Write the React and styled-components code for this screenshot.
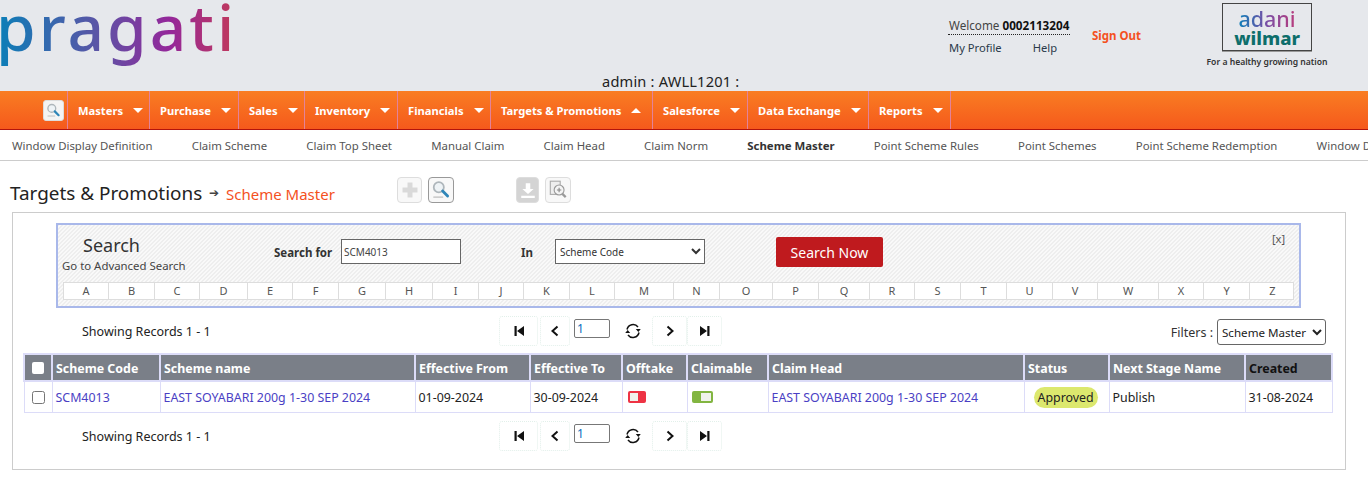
import React from 'react';
import styled, { createGlobalStyle } from 'styled-components';

const GlobalStyle = createGlobalStyle`
    html, body {
        margin: 0;
        padding: 0;
        background: #fff;
        overflow: hidden;
    }
    body {
        font-family: 'Noto Sans', 'Open Sans', sans-serif;
        color: #222;
    }
`
const Page = styled.div`
    width: 1368px;
    height: 481px;
    overflow: hidden;
`
const Header = styled.header`
    height: 91px;
    background: #e6e8ec;
    display: flex;
    position: relative;
`
const LogoWord = styled.div`
    width: 944px;
    height: 46px;
    font-size: 64px;
    font-weight: 500;
    line-height: 46px;
    letter-spacing: 3px;
    margin: 4px 4px 0 0;
    span {
        margin-left: -4px;
        background: linear-gradient(90deg, #0a7fb8 0%, #5b55a6 42%, #94279a 72%, #c23a5a 100%);
        -webkit-background-clip: text;
        background-clip: text;
        color: transparent;
    }
`
const UserBlock = styled.div`
    width: 122px;
    padding-top: 17px;
    font-size: 11.7px;
`
const Welcome = styled.div`
    height: 17px;
    line-height: 17px;
    border-bottom: 1px dotted #222;
    color: #444;
    white-space: nowrap;
    padding-left: 1px;
    b {
        color: #111;
    }
`
const UserLinks = styled.div`
    display: flex;
    gap: 31px;
    padding: 4px 0 0 1px;
    line-height: 17px;
    font-size: 11.2px;
    color: #2a3a4a;
`
const SignOut = styled.a`
    margin: 27px 0 0 22px;
    width: 118px;
    font-size: 11.5px;
    font-weight: 700;
    color: #f4511e;
    line-height: 17px;
`
const BrandBlock = styled.div`
    width: 122px;
    padding-top: 3px;
    display: flex;
    flex-direction: column;
    align-items: center;
    margin-left: -4px;
`
const BrandBox = styled.div`
    width: 90px;
    height: 48px;
    border: 1px solid #444;
    box-sizing: border-box;
    box-shadow: 0 1px 0 #999;
    text-align: center;
    display: flex;
    flex-direction: column;
    align-items: center;
    padding-top: 3px;
`
const BrandTop = styled.div`
    font-size: 21.5px;
    font-weight: 500;
    line-height: 23px;
    background: linear-gradient(90deg, #0a7fb8, #7a4ea5, #b93c7c);
    -webkit-background-clip: text;
    background-clip: text;
    color: transparent;
`
const BrandBottom = styled.div`
    font-size: 18.5px;
    font-weight: 800;
    line-height: 17px;
    margin-top: -1px;
    color: #0d6e6b;
`
const Tagline = styled.div`
    font-size: 8.6px;
    font-weight: 600;
    color: #333;
    margin-top: 5px;
    white-space: nowrap;
`
const AdminLine = styled.div`
    position: absolute;
    left: 602px;
    top: 72px;
    font-size: 14.6px;
    letter-spacing: 0.2px;
    line-height: 19px;
    color: #222;
`
const Nav = styled.nav`
    height: 38px;
    background: linear-gradient(#f97d22, #f5591c);
    border-bottom: 1px solid #b3130c;
    display: flex;
    padding-left: 43px;
`
const NavSearch = styled.div`
    width: 24px;
    display: flex;
    align-items: center;
`
const NavIconBox = styled.div`
    width: 21px;
    height: 21px;
    box-sizing: border-box;
    border: 1px solid #ddd;
    border-radius: 3px;
    background: #f4f4f4;
    display: flex;
    align-items: center;
    justify-content: center;
`
const NavItem = styled.div`
    width: ${p => p.$w}px;
    box-sizing: border-box;
    border-left: 1px solid #e3829a;
    color: #fff;
    font-size: 11.2px;
    font-weight: 700;
    display: flex;
    align-items: center;
    padding-left: 10px;
    gap: 10px;
    white-space: nowrap;
    &:last-child {
        border-right: 1px solid #e3829a;
    }
`
const Caret = styled.span`
    width: 0;
    height: 0;
    border-left: 5px solid transparent;
    border-right: 5px solid transparent;
    border-top: ${p => p.$up ? '0' : '5px solid #fff'};
    border-bottom: ${p => p.$up ? '5px solid #fff' : '0'};
`
const SubNav = styled.div`
    height: 30px;
    border-bottom: 1px solid #ccc;
    display: flex;
    align-items: center;
    gap: 39.2px;
    padding-left: 12px;
    font-size: 11.4px;
    color: #555;
    white-space: nowrap;
    overflow: hidden;
`
const SubItem = styled.span`
    font-weight: ${p => p.$active ? 700 : 400};
    color: ${p => p.$active ? '#333' : '#555'};
`
const TitleRow = styled.div`
    height: 51px;
    display: flex;
    align-items: center;
    padding: 9px 0 0 10px;
    box-sizing: border-box;
`
const Crumb = styled.div`
    font-size: 18.9px;
    color: #222;
    width: 199px;
    white-space: nowrap;
    margin-top: 3px;
`
const CrumbArrow = styled.span`
    color: #444;
    font-size: 12px;
    width: 17px;
    margin-top: 2px;
`
const CrumbCurrent = styled.div`
    color: #f4511e;
    font-size: 15px;
    width: 171px;
    white-space: nowrap;
    margin-top: 6px;
`
const ToolGroup = styled.div`
    display: flex;
    gap: 6px;
    margin-right: ${p => p.$mr || 0}px;
    margin-top: -2px;
`
const ToolButton = styled.div`
    width: ${p => p.$w || 26}px;
    height: 26px;
    border: 1px solid ${p => p.$on ? '#999' : '#ddd'};
    border-radius: 4px;
    background: ${p => p.$fill || '#f8f8f8'};
    box-sizing: border-box;
    display: flex;
    align-items: center;
    justify-content: center;
`
const Panel = styled.section`
    margin-left: 12px;
    width: 1334px;
    height: 258px;
    box-sizing: border-box;
    border: 1px solid #ccc;
    padding: 10px 11px 0;
`
const SearchBox = styled.div`
    width: 1245px;
    height: 85px;
    margin-left: 32px;
    box-sizing: border-box;
    border: 2px solid #a9b8ea;
    background: repeating-linear-gradient(135deg, #eeeeee 0 1.414px, #f9f9f9 1.414px 2.828px);
    position: relative;
    padding: 0 5px;
`
const SearchTop = styled.div`
    height: 57px;
    display: flex;
    align-items: flex-start;
`
const SearchTitle = styled.div`
    width: 211px;
    padding-top: 8px;
`
const SearchHeading = styled.div`
    font-size: 18px;
    line-height: 25px;
    padding-left: 20px;
    color: #333;
`
const AdvLink = styled.div`
    font-size: 11.4px;
    line-height: 15px;
    color: #444;
    white-space: nowrap;
    margin-left: -1px;
`
const FieldLabel = styled.label`
    font-size: 11.5px;
    font-weight: 700;
    color: #333;
    line-height: 17px;
    margin-top: 19px;
    width: ${p => p.$w}px;
`
const SearchInput = styled.input`
    width: 120px;
    height: 25px;
    margin-top: 14px;
    box-sizing: border-box;
    border: 1px solid #666;
    background: #fff;
    font: 10px 'Noto Sans', sans-serif;
    color: #444;
    padding: 0 2px;
    margin-right: 60px;
`
const SearchSelect = styled.select`
    width: 150px;
    height: 25px;
    margin-top: 14px;
    box-sizing: border-box;
    border: 1px solid #666;
    background: #fff;
    font: 10px 'Noto Sans', sans-serif;
    color: #333;
    margin-right: 71px;
    padding: 0;
`
const SearchButton = styled.button`
    width: 107px;
    height: 30px;
    margin-top: 12px;
    border: 0;
    border-radius: 2px;
    background: #bf1a1e;
    color: #fff;
    font: 14px 'Noto Sans', sans-serif;
    padding: 0;
`
const CloseLink = styled.span`
    position: absolute;
    top: 6px;
    right: 14px;
    font-size: 11px;
    color: #555;
`
const Alphabet = styled.div`
    display: grid;
    grid-template-columns: 45px 46px 45px 48px 45px 46px 47px 47px 46px 45px 46px 45px 59px 46px 53px 46px 51px 45px 46px 46px 46px 45px 61px 45px 46px 45px;
    width: 1231px;
    height: 18px;
    box-sizing: border-box;
    background: #fff;
    border: 1px solid #ddd;
`
const Letter = styled.span`
    font-size: 11px;
    line-height: 16px;
    color: #555;
    text-align: center;
    border-right: 1px solid #ddd;
    &:last-child {
        border-right: 0;
    }
`
const Pager = styled.div`
    height: ${p => p.$h}px;
    display: flex;
    align-items: center;
    position: relative;
    padding-top: ${p => p.$pt || 0}px;
    box-sizing: border-box;
`
const Records = styled.div`
    width: 475px;
    padding: 1px 0 0 58px;
    box-sizing: border-box;
    font-size: 12.5px;
    color: #222;
`
const PageButton = styled.div`
    width: ${p => p.$w}px;
    height: 30px;
    box-sizing: border-box;
    border: 1px dotted #e2f0ea;
    border-radius: 3px;
    display: flex;
    align-items: center;
    justify-content: center;
    margin-right: ${p => p.$mr || 0}px;
`
const PageInput = styled.input`
    width: 36px;
    height: 19px;
    box-sizing: border-box;
    border: 1px solid #777;
    border-radius: 2px;
    font: 12px 'Noto Sans', sans-serif;
    color: #0a6ebd;
    padding: 0 2px;
    margin: -5px 14px 0 0;
`
const RefreshWrap = styled.div`
    width: 28px;
    display: flex;
    justify-content: flex-start;
`
const FilterBlock = styled.div`
    position: absolute;
    right: 8px;
    top: 11px;
    display: flex;
    align-items: center;
    gap: 4px;
    font-size: 12.5px;
    color: #333;
`
const FilterSelect = styled.select`
    width: 109px;
    height: 26px;
    box-sizing: border-box;
    border: 1px solid #666;
    border-radius: 3px;
    background: #fff;
    font: 11.6px 'Noto Sans', sans-serif;
    color: #222;
    padding: 0;
`
const Table = styled.table`
    width: 1309px;
    margin-left: -1px;
    border-collapse: collapse;
    table-layout: fixed;
    font-size: 12.4px;
    border: 1px solid #dcdcf8;
`
const Th = styled.th`
    height: 24px;
    padding: 1px 3px 0;
    background: #7a7f88;
    border: 2px solid #dcdcf8;
    color: ${p => p.$dark ? '#111' : '#fff'};
    font-weight: 700;
    text-align: left;
    white-space: nowrap;
    overflow: hidden;
`
const Td = styled.td`
    height: 30px;
    padding: 0 3px;
    border: 1px solid #dcdcf8;
    color: #222;
    white-space: nowrap;
    overflow: hidden;
`
const RowLink = styled.a`
    color: #4a3fc4;
`
const Toggle = styled.span`
    display: block;
    width: ${p => p.$w}px;
    height: 12px;
    margin-left: ${p => p.$ml}px;
    border-radius: 2px;
    background: ${p => p.$color};
    position: relative;
    &::after {
        content: '';
        position: absolute;
        top: 2px;
        bottom: 2px;
        left: ${p => p.$knob}px;
        width: ${p => p.$kw}px;
        background: #f0f2ec;
    }
`
const StatusPill = styled.span`
    display: inline-block;
    margin-left: 6px;
    padding: 0 4px;
    line-height: 21px;
    border-radius: 11px;
    background: #dce86e;
    color: #222;
`
const CheckBox = styled.input`
    display: block;
    margin: 0 auto;
    width: 13px;
    height: 13px;
    accent-color: #fff;
`
const HeadCheck = styled.span`
    display: block;
    width: 12px;
    height: 12px;
    margin: 0 auto;
    border-radius: 2px;
    background: #fff;
`

const menus = [
    ['Masters', 82],
    ['Purchase', 89],
    ['Sales', 66],
    ['Inventory', 93],
    ['Financials', 93],
    ['Targets & Promotions', 162, true],
    ['Salesforce', 95],
    ['Data Exchange', 121],
    ['Reports', 83],
];
const subItems = ['Window Display Definition', 'Claim Scheme', 'Claim Top Sheet', 'Manual Claim', 'Claim Head', 'Claim Norm', 'Scheme Master', 'Point Scheme Rules', 'Point Schemes', 'Point Scheme Redemption', 'Window Display Definition'];
const letters = 'ABCDEFGHIJKLMNOPQRSTUVWXYZ'.split('');
const columns = [28, 108, 255, 115, 92, 65, 81, 256, 85, 136, 87];
const schemeName = 'EAST SOYABARI 200g 1-30 SEP 2024';

function Magnifier({ size }) {
    return (
        <svg width={size} height={size} viewBox="0 0 20 20">
            <circle cx="8" cy="7.5" r="4.6" fill="#eef3f6" stroke="#aeb6bb" strokeWidth="1.6" />
            <path d="M11.5 11l4.5 4.5" stroke="#2f86b8" strokeWidth="2.6" strokeLinecap="round" />
            <path d="M3 16.5h9" stroke="#c9c9c9" strokeWidth="1.4" />
        </svg>
    );
}

function FirstIcon() {
    return <svg width="12" height="12" viewBox="0 0 12 12"><path d="M1.5 1h2.2v10H1.5zM11 1v10L4 6z" fill="#111" /></svg>;
}
function LastIcon() {
    return <svg width="12" height="12" viewBox="0 0 12 12"><path d="M8.3 1h2.2v10H8.3zM1 1v10l7-5z" fill="#111" /></svg>;
}
function Chevron({ right }) {
    return (
        <svg width="10" height="12" viewBox="0 0 10 12">
            <path d={right ? 'M2.5 1.5L7.5 6l-5 4.5' : 'M7.5 1.5L2.5 6l5 4.5'} fill="none" stroke="#111" strokeWidth="2" />
        </svg>
    );
}
function RefreshIcon() {
    return (
        <svg width="18" height="18" viewBox="0 0 18 18">
            <path d="M3 7.5A6.2 6.2 0 0 1 14 5" fill="none" stroke="#111" strokeWidth="1.5" />
            <path d="M15 10.5A6.2 6.2 0 0 1 4 13" fill="none" stroke="#111" strokeWidth="1.5" />
            <path d="M11.8 7h5l-2.5 3zM1.2 11h5L3.7 8z" fill="#111" />
        </svg>
    );
}

function Pagination() {
    return (
        <>
            <PageButton $w={39} $mr={2}><FirstIcon /></PageButton>
            <PageButton $w={30} $mr={4}><Chevron /></PageButton>
            <PageInput defaultValue="1" />
            <RefreshWrap><RefreshIcon /></RefreshWrap>
            <PageButton $w={35}><Chevron right /></PageButton>
            <PageButton $w={35}><LastIcon /></PageButton>
        </>
    );
}

export default function App() {
    return (
        <Page>
            <GlobalStyle />
            <Header>
                <LogoWord><span>pragati</span></LogoWord>
                <UserBlock>
                    <Welcome>Welcome <b>0002113204</b></Welcome>
                    <UserLinks><span>My Profile</span><span>Help</span></UserLinks>
                </UserBlock>
                <SignOut>Sign Out</SignOut>
                <BrandBlock>
                    <BrandBox>
                        <BrandTop>adani</BrandTop>
                        <BrandBottom>wilmar</BrandBottom>
                    </BrandBox>
                    <Tagline>For a healthy growing nation</Tagline>
                </BrandBlock>
                <AdminLine>admin : AWLL1201 :</AdminLine>
            </Header>
            <Nav>
                <NavSearch>
                    <NavIconBox><Magnifier size={17} /></NavIconBox>
                </NavSearch>
                {menus.map(([label, width, up]) => (
                    <NavItem key={label} $w={width}>{label}<Caret $up={up} /></NavItem>
                ))}
            </Nav>
            <SubNav>
                {subItems.map((item, i) => (
                    <SubItem key={i} $active={item === 'Scheme Master'}>{item}</SubItem>
                ))}
            </SubNav>
            <TitleRow>
                <Crumb>Targets &amp; Promotions</Crumb>
                <CrumbArrow>➔</CrumbArrow>
                <CrumbCurrent>Scheme Master</CrumbCurrent>
                <ToolGroup $mr={62}>
                    <ToolButton $w={25}>
                        <svg width="18" height="18" viewBox="0 0 18 18"><path d="M6.5 1.5h5v5h5v5h-5v5h-5v-5h-5v-5h5z" fill="#d9d9d9" /></svg>
                    </ToolButton>
                    <ToolButton $on><Magnifier size={22} /></ToolButton>
                </ToolGroup>
                <ToolGroup>
                    <ToolButton $w={23} $fill="#d4d4d4">
                        <svg width="18" height="18" viewBox="0 0 16 16"><path d="M6 2h4v5h3l-5 4.5L3 7h3zM2 13h12v2H2z" fill="#fff" /></svg>
                    </ToolButton>
                    <ToolButton>
                        <svg width="22" height="22" viewBox="0 0 20 20">
                            <rect x="3" y="2" width="9" height="12" fill="#eee" stroke="#aaa" />
                            <circle cx="11" cy="10" r="4.5" fill="#f4f4f4" stroke="#999" />
                            <path d="M9 10h4M11 8v4" stroke="#888" />
                            <path d="M14 13.5l3 3" stroke="#999" strokeWidth="2" />
                        </svg>
                    </ToolButton>
                </ToolGroup>
            </TitleRow>
            <Panel>
                <SearchBox>
                    <SearchTop>
                        <SearchTitle>
                            <SearchHeading>Search</SearchHeading>
                            <AdvLink>Go to Advanced Search</AdvLink>
                        </SearchTitle>
                        <FieldLabel $w={67}>Search for</FieldLabel>
                        <SearchInput defaultValue="SCM4013" />
                        <FieldLabel $w={34}>In</FieldLabel>
                        <SearchSelect defaultValue="Scheme Code"><option>Scheme Code</option></SearchSelect>
                        <SearchButton>Search Now</SearchButton>
                    </SearchTop>
                    <CloseLink>[x]</CloseLink>
                    <Alphabet>
                        {letters.map(letter => <Letter key={letter}>{letter}</Letter>)}
                    </Alphabet>
                </SearchBox>
                <Pager $h={45} $pt={1}>
                    <Records>Showing Records 1 - 1</Records>
                    <Pagination />
                    <FilterBlock>
                        Filters :
                        <FilterSelect defaultValue="Scheme Master"><option>Scheme Master</option></FilterSelect>
                    </FilterBlock>
                </Pager>
                <Table>
                    <colgroup>
                        {columns.map((width, i) => <col key={i} style={{ width }} />)}
                    </colgroup>
                    <thead>
                        <tr>
                            <Th><HeadCheck /></Th>
                            <Th>Scheme Code</Th>
                            <Th>Scheme name</Th>
                            <Th>Effective From</Th>
                            <Th>Effective To</Th>
                            <Th>Offtake</Th>
                            <Th>Claimable</Th>
                            <Th>Claim Head</Th>
                            <Th>Status</Th>
                            <Th>Next Stage Name</Th>
                            <Th $dark>Created</Th>
                        </tr>
                    </thead>
                    <tbody>
                        <tr>
                            <Td><CheckBox type="checkbox" /></Td>
                            <Td><RowLink>SCM4013</RowLink></Td>
                            <Td><RowLink>{schemeName}</RowLink></Td>
                            <Td>01-09-2024</Td>
                            <Td>30-09-2024</Td>
                            <Td><Toggle $w={18} $ml={2} $color="#ee3344" $knob={2} $kw={8} /></Td>
                            <Td><Toggle $w={21} $ml={1} $color="#82b541" $knob={9} $kw={10} /></Td>
                            <Td><RowLink>{schemeName}</RowLink></Td>
                            <Td><StatusPill>Approved</StatusPill></Td>
                            <Td>Publish</Td>
                            <Td>31-08-2024</Td>
                        </tr>
                    </tbody>
                </Table>
                <Pager $h={45}>
                    <Records>Showing Records 1 - 1</Records>
                    <Pagination />
                </Pager>
            </Panel>
        </Page>
    );
}
